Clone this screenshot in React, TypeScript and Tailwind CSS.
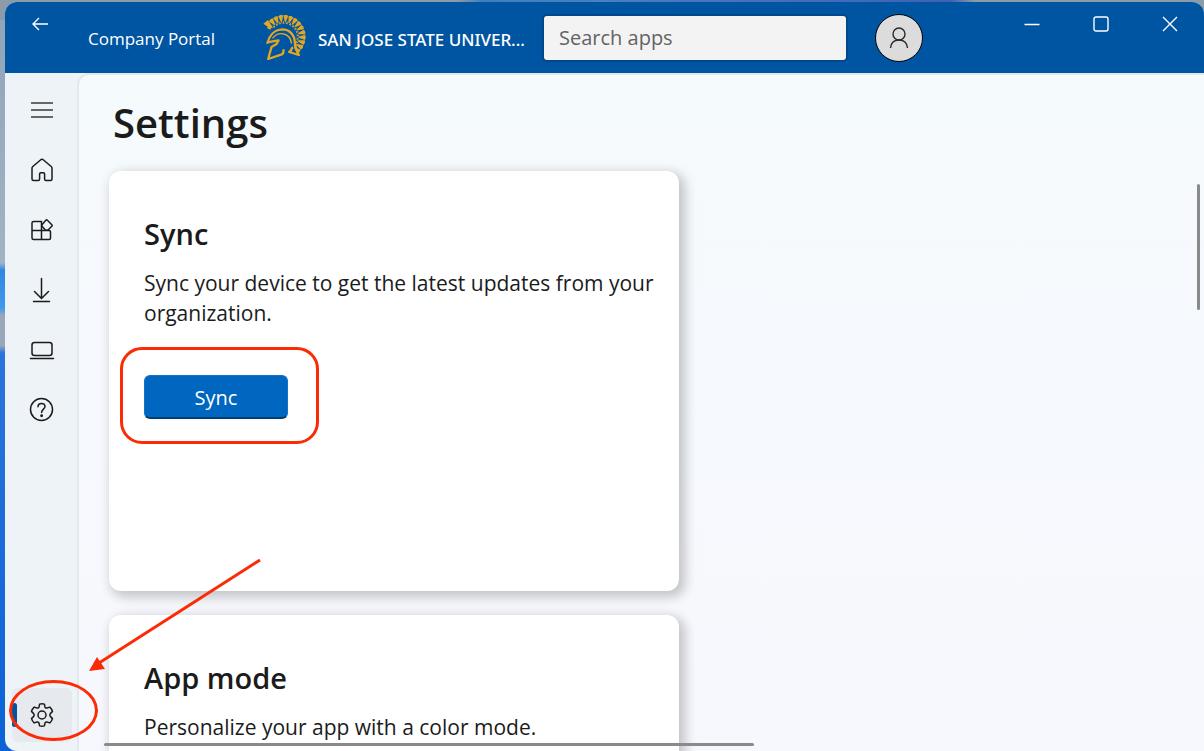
import { ReactNode } from "react";
import clsx from "clsx";

const NavButton = ({
  label,
  active,
  children,
}: {
  label: string;
  active?: boolean;
  children: ReactNode;
}) => (
  <button
    type="button"
    aria-label={label}
    className={clsx(
      "relative flex h-[54px] w-[60px] items-center justify-center rounded-md",
      active && "bg-[#e6e9ee]",
    )}
  >
    {active && (
      <span className="absolute left-0 h-6 w-[5px] rounded-full bg-[#0055a2]" />
    )}
    {children}
  </button>
);

const NavIcon = ({ children }: { children: ReactNode }) => (
  <svg
    viewBox="0 0 26 26"
    className="h-[26px] w-[26px]"
    fill="none"
    stroke="#1b1b1b"
    strokeWidth="1.5"
    strokeLinecap="round"
    strokeLinejoin="round"
  >
    {children}
  </svg>
);

const Card = ({
  title,
  text,
  children,
}: {
  title: string;
  text: string;
  children?: ReactNode;
}) => (
  <section className="h-[420px] w-full max-w-[570px] shrink-0 rounded-xl bg-white px-[35px] pt-[45px] shadow-[4px_4px_12px_2px_rgba(0,0,0,0.22)]">
    <h2 className="text-[29px] leading-9 font-semibold">{title}</h2>
    <p className="mt-4 -mr-8 text-[21px] leading-[30px]">{text}</p>
    {children}
  </section>
);

// Feather wedges of the helmet crest, fanned around one centre
const at = (deg: number, r: number) => {
  const a = (deg * Math.PI) / 180;
  return `${(62 + r * Math.cos(a)).toFixed(1)},${(65 + r * Math.sin(a)).toFixed(1)}`;
};
const angles = Array.from({ length: 14 }, (_, i) => -142 + i * 14.4);

const HelmetLogo = () => (
  <svg viewBox="0 0 128 138" className="h-[46px] w-[43px] shrink-0" fill="none">
    {angles.map((d) => (
      <g key={d} fill="#e0a626">
        <polygon
          points={`${at(d - 6.8, 64)} ${at(d, 66)} ${at(d + 6.8, 64)} ${at(d + 1.5, 43)} ${at(d - 1.5, 43)}`}
        />
        <polygon points={`${at(d + 2.5, 39)} ${at(d + 7.2, 48)} ${at(d + 12, 39)}`} />
      </g>
    ))}
    <path d="M0 27L14 15L26 34L22 44L12 40L13 32Z" fill="#e0a626" />
    <g stroke="#e0a626" strokeLinejoin="round">
      <path
        d="M12 86C18 62 34 44 57 43C80 43 94 60 95 82C96 100 101 110 107 120L78 111C84 107 86 103 86 98"
        strokeWidth="7"
      />
      <path
        d="M11 82L46 76L40 87L25 96L15 132L56 118C62 116 61 110 61 103"
        strokeWidth="7"
      />
      <path d="M28 70C38 58 50 54 62 57C76 60 83 70 85 86" strokeWidth="4" />
    </g>
  </svg>
);

const TitleBar = () => (
  <header className="flex h-[71px] shrink-0 items-center bg-[#0055a2] text-white">
    <button
      type="button"
      aria-label="Back"
      className="flex h-11 w-[70px] shrink-0 items-center justify-center self-start"
    >
      <svg
        viewBox="0 0 18 16"
        className="h-4 w-[18px]"
        fill="none"
        stroke="currentColor"
        strokeWidth="1.4"
      >
        <path d="M17 8H2M8 2L2 8L8 14" />
      </svg>
    </button>
    <span className="ml-[13px] w-[175px] shrink-0 pt-0.5 text-[17px] whitespace-nowrap">
      Company Portal
    </span>
    <HelmetLogo />
    <span className="ml-3 w-[226px] shrink-0 pt-1 font-['Noto_Sans',sans-serif] text-[17px] font-medium whitespace-nowrap">
      SAN JOSE STATE UNIVER...
    </span>
    <input
      type="search"
      aria-label="Search apps"
      placeholder="Search apps"
      className="h-11 w-[302px] min-w-0 rounded-[3px] bg-[#f3f3f3] px-[15px] text-xl text-[#1b1b1b] shadow-[0_0_0_2px_#00478b] outline-none placeholder:text-[#636363]"
    />
    <button
      type="button"
      aria-label="Account"
      className="ml-[29px] flex h-12 w-12 shrink-0 items-center justify-center rounded-full border border-black bg-[#dcdcdc]"
    >
      <svg
        viewBox="0 0 20 22"
        className="h-[22px] w-5"
        fill="none"
        stroke="#2b2b2b"
        strokeWidth="1.4"
      >
        <circle cx="10" cy="7" r="6" />
        <path d="M1.5 21C2 16 5 13 10 13S18 16 18.5 21" />
      </svg>
    </button>
    <div className="ml-auto flex shrink-0 self-start">
      <button
        type="button"
        aria-label="Minimize"
        className="flex h-11 w-[69px] items-center justify-center"
      >
        <svg viewBox="0 0 16 16" className="h-4 w-4" stroke="currentColor" strokeWidth="1.5">
          <path d="M0.5 8.5H15.5" />
        </svg>
      </button>
      <button
        type="button"
        aria-label="Maximize"
        className="flex h-11 w-[69px] items-center justify-center"
      >
        <svg
          viewBox="0 0 16 16"
          className="h-4 w-4"
          fill="none"
          stroke="currentColor"
          strokeWidth="1.4"
        >
          <rect x="1" y="1" width="14" height="14" rx="2" />
        </svg>
      </button>
      <button
        type="button"
        aria-label="Close"
        className="flex h-11 w-[69px] items-center justify-center"
      >
        <svg viewBox="0 0 16 16" className="h-4 w-4" stroke="currentColor" strokeWidth="1.4">
          <path d="M1 1L15 15M15 1L1 15" />
        </svg>
      </button>
    </div>
  </header>
);

const Sidebar = () => (
  <nav className="relative flex w-[72px] shrink-0 flex-col gap-1.5 px-[7px] pt-[10px] pb-[9px]">
    <NavButton label="Menu">
      <svg viewBox="0 0 22 18" className="h-[18px] w-[22px]" stroke="#3a3a3a" strokeWidth="1.5">
        <path d="M0 2H22M0 9H22M0 16H22" />
      </svg>
    </NavButton>
    <NavButton label="Home">
      <NavIcon>
        <path d="M3 11.2Q3 10.2 3.8 9.5L11.8 2.7Q13 1.8 14.2 2.7L22.2 9.5Q23 10.2 23 11.2V22Q23 23.5 21.5 23.5H17Q15.6 23.5 15.6 22V17Q15.6 15.8 14.4 15.8H11.8Q10.6 15.8 10.6 17V22Q10.6 23.5 9.2 23.5H4.5Q3 23.5 3 22Z" />
      </NavIcon>
    </NavButton>
    <NavButton label="Apps">
      <NavIcon>
        <path d="M12.5 4.5H4.5Q3 4.5 3 6V21Q3 22.5 4.5 22.5H20Q21.5 22.5 21.5 21V15Q21.5 13.5 20 13.5H3M12.5 4.5V22.5" />
        <path d="M16.8 3.3Q17.6 2.5 18.4 3.3L22.8 7.7Q23.6 8.5 22.8 9.3L18.8 13.3H16.6L13 9.3Q12.2 8.5 13 7.7Z" />
      </NavIcon>
    </NavButton>
    <NavButton label="Downloads">
      <NavIcon>
        <path d="M12.5 1.5V21M5.5 14.5L12.5 21.5L19.5 14.5M4.5 24.5H20.5" />
      </NavIcon>
    </NavButton>
    <NavButton label="Devices">
      <NavIcon>
        <rect x="3" y="5.5" width="20" height="13" rx="2.5" />
        <path d="M1.5 21.5H24.5" />
      </NavIcon>
    </NavButton>
    <NavButton label="Help">
      <NavIcon>
        <circle cx="12.5" cy="12.5" r="11" />
        <path d="M9 9.8Q9 6.5 12.5 6.5T16 9.6C16 12 12.6 12.4 12.6 15.4" />
        <circle cx="12.6" cy="18.7" r="0.7" fill="#1b1b1b" />
      </NavIcon>
    </NavButton>
    <div className="relative mt-auto">
      <NavButton label="Settings" active>
        <NavIcon>
          <circle cx="13" cy="13" r="4" />
          <path d="M10.6 2.1Q13 1.3 15.4 2.1L16 5Q16.4 6.4 17.9 6L20.8 5.1Q22.8 7 23.5 9.4L21.3 11.6Q20.2 13 21.3 14.4L23.5 16.6Q22.8 19 20.8 20.9L17.9 20Q16.4 19.6 16 21L15.4 23.9Q13 24.7 10.6 23.9L10 21Q9.6 19.6 8.1 20L5.2 20.9Q3.2 19 2.5 16.6L4.7 14.4Q5.8 13 4.7 11.6L2.5 9.4Q3.2 7 5.2 5.1L8.1 6Q9.6 6.4 10 5Z" />
        </NavIcon>
      </NavButton>
      <span className="pointer-events-none absolute -top-2 -left-[3px] z-20 h-[61px] w-[89px] rounded-[50%] border-[3px] border-[#fb2b06]" />
      <svg
        viewBox="0 0 180 120"
        className="pointer-events-none absolute bottom-[65px] left-[73px] z-20 h-[120px] w-[180px] max-w-none"
        fill="none"
      >
        <path d="M175 3L14 106" stroke="#fb2b06" strokeWidth="3" />
        <path d="M4 114L12 100L20 112Z" fill="#fb2b06" />
      </svg>
    </div>
  </nav>
);

export default function App() {
  return (
    <div className="h-screen overflow-hidden bg-[linear-gradient(#8fa4b8_0,#a0b4c8_35%,#2f86e4_36%,#3f9be8_41%,#9aa7bb_42%,#9aa7bb_46%,#2a75dc_47%,#0a62d6_100%)] font-['Open_Sans','Noto_Sans',sans-serif] text-[#1b1b1b]">
      <div className="flex h-full flex-col bg-[linear-gradient(90deg,#8b9ca9_38%,#3f7fbd_40%,#4a7fc0_50%,#3d62b4_79%,#8b9ca9_81%)] bg-[length:100%_20px] bg-no-repeat pt-0.5 pl-[5px]">
        <div className="flex min-h-0 flex-1 flex-col overflow-hidden rounded-tl-xl rounded-tr-xl rounded-bl-xl bg-[#eef3f8]">
          <TitleBar />
          <div className="flex min-h-0 flex-1">
            <Sidebar />
            <main className="relative flex min-w-0 flex-1 flex-col overflow-hidden rounded-tl-xl border-t-2 border-l-2 border-[#e3e8ec] bg-linear-to-b from-[#f5fafd] to-[#f7f8fd] pt-5 pl-[30px]">
              <h1 className="mb-5 ml-1 text-[40px] leading-[56px] font-semibold">
                Settings
              </h1>
              <div className="flex flex-col gap-6">
                <Card
                  title="Sync"
                  text="Sync your device to get the latest updates from your organization."
                >
                  <div className="relative mt-[47px] w-fit">
                    <button
                      type="button"
                      className="h-11 w-36 rounded-md border border-b-2 border-[#1473c5] border-b-[#003e73] bg-[#0067c0] pt-0.5 text-xl text-white"
                    >
                      Sync
                    </button>
                    <span className="pointer-events-none absolute -top-7 -left-6 h-[97px] w-[199px] rounded-[22px] border-[3px] border-[#fb2b06]" />
                  </div>
                </Card>
                <Card title="App mode" text="Personalize your app with a color mode." />
              </div>
              {/* Scroll thumbs */}
              <span className="absolute top-[109px] right-1 h-[126px] w-[3px] rounded-full bg-[#8a8a8a]" />
              <span className="absolute bottom-[5px] left-[25px] h-[3px] w-[650px] rounded-full bg-[#8a8a8a]" />
            </main>
          </div>
        </div>
      </div>
    </div>
  );
}
